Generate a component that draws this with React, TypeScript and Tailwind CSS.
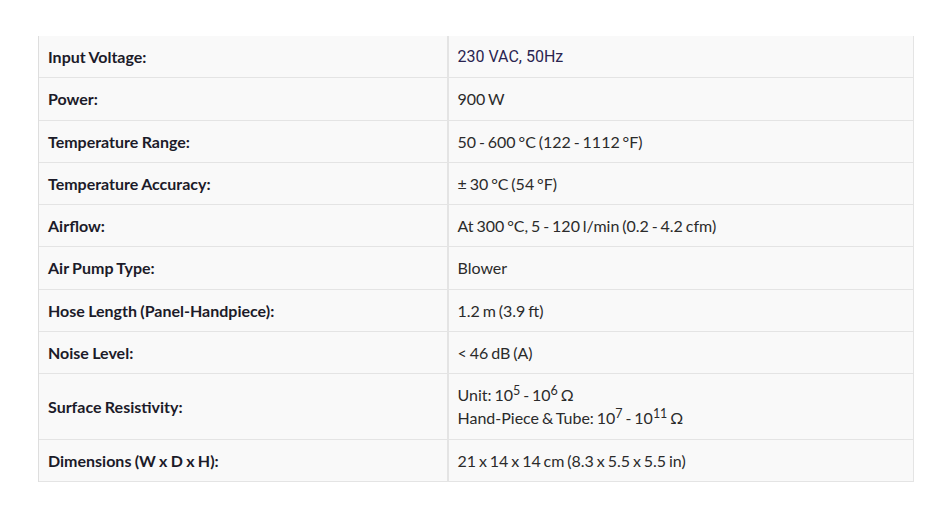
import type { ReactNode } from "react";

type Spec = { label: string; value: ReactNode; roboto?: boolean };

const specs: Spec[] = [
  { label: "Input Voltage:", value: "230 VAC, 50Hz", roboto: true },
  { label: "Power:", value: "900 W" },
  { label: "Temperature Range:", value: "50 - 600 °C (122 - 1112 °F)" },
  { label: "Temperature Accuracy:", value: "± 30 °C (54 °F)" },
  { label: "Airflow:", value: "At 300 °C, 5 - 120 l/min (0.2 - 4.2 cfm)" },
  { label: "Air Pump Type:", value: "Blower" },
  { label: "Hose Length (Panel-Handpiece):", value: "1.2 m (3.9 ft)" },
  { label: "Noise Level:", value: "< 46 dB (A)" },
  {
    label: "Surface Resistivity:",
    value: (
      <>
        Unit: 10<sup className="text-[12.5px]">5</sup> - 10<sup className="text-[12.5px]">6</sup> Ω
        <br />
        Hand-Piece &amp; Tube: 10<sup className="text-[12.5px]">7</sup> - 10<sup className="text-[12.5px]">11</sup> Ω
      </>
    ),
  },
  { label: "Dimensions (W x D x H):", value: "21 x 14 x 14 cm (8.3 x 5.5 x 5.5 in)" },
];

export default function App() {
  return (
    <div className="w-[950px] h-[520px] bg-white pt-[36px] pl-[38px] font-['Lato','Liberation_Sans',sans-serif]">
      <table className="w-[876px] border-collapse bg-[#f9f9f9] text-[16px] leading-[23.25px]">
        <tbody>
          {specs.map((s) => (
            <tr key={s.label} className="border-b border-[#e4e4e4]">
              <td className="w-[409px] border-l border-[#dedede] pl-[9px] pr-[10px] py-[9px] font-bold text-[#1c1b29] [word-spacing:-0.6px]">
                {s.label}
              </td>
              <td
                className={
                  s.roboto
                    ? "border-l-2 border-r border-[#e4e4e4] pl-[9px] pr-[10px] py-[9px] font-['Roboto',sans-serif] text-[#2a2450]"
                    : "border-l-2 border-r border-[#e4e4e4] pl-[9px] pr-[10px] py-[9px] text-[#2b2b2b] [word-spacing:-1.2px]"
                }
              >
                {s.value}
              </td>
            </tr>
          ))}
        </tbody>
      </table>
    </div>
  );
}
